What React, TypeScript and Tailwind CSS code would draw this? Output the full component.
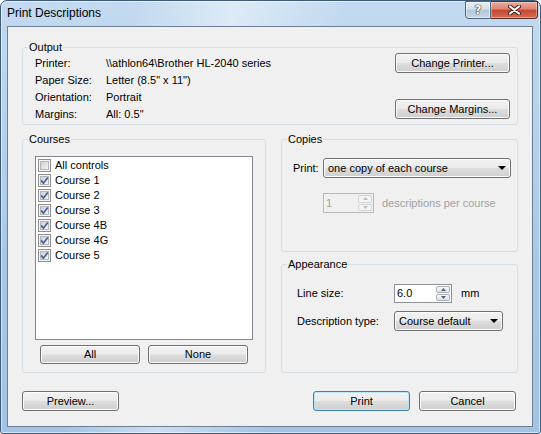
import React from 'react';

const gradient =
  'bg-[linear-gradient(to_bottom,#f2f2f2_0%,#ebebeb_48%,#dddddd_52%,#cfcfcf_100%)]';

interface ButtonProps {
  label: string;
  className?: string;
  isDefault?: boolean;
}

const VistaButton: React.FC<ButtonProps> = ({ label, className = '', isDefault }) => (
  <div
    className={`flex items-center justify-center rounded-[3px] border leading-none ${gradient} ${
      isDefault
        ? 'border-[#3c7fb1] shadow-[inset_0_0_0_1px_#bfe6f8]'
        : 'border-[#707070] shadow-[inset_0_0_0_1px_#fcfcfc]'
    } ${className}`}
  >
    {label}
  </div>
);

const GroupBox: React.FC<{ title: string; className?: string; children: React.ReactNode }> = ({
  title,
  className = '',
  children,
}) => (
  <fieldset className={`rounded-[3px] border border-[#d5dfe5] ${className}`}>
    <legend className="ml-[5px] px-[1px] text-[11px] leading-[13px]">{title}</legend>
    {children}
  </fieldset>
);

const CheckBox: React.FC<{ checked?: boolean }> = ({ checked }) => (
  <svg width="13" height="13" viewBox="0 0 13 13" className="shrink-0">
    <defs>
      <linearGradient id="cbInner" x1="0" y1="0" x2="1" y2="1">
        <stop offset="0" stopColor="#c9ccd1" />
        <stop offset="1" stopColor="#f7f7f7" />
      </linearGradient>
    </defs>
    <rect x="0.5" y="0.5" width="12" height="12" fill="#f5f5f5" stroke="#8e8f8f" />
    <rect x="2.5" y="2.5" width="8" height="8" fill="url(#cbInner)" stroke="#b3b7bc" />
    {checked && (
      <path d="M3.2 6.4 L5.4 9.2 L9.8 3.4" fill="none" stroke="#4a5f97" strokeWidth="1.7" />
    )}
  </svg>
);

const Arrow: React.FC<{ up?: boolean; color: string }> = ({ up, color }) => (
  <svg width="5" height="3" viewBox="0 0 5 3">
    <path d={up ? 'M0 3h5L2.5 0z' : 'M0 0h5L2.5 3z'} fill={color} />
  </svg>
);

const SpinBox: React.FC<{ value: string; className?: string; disabled?: boolean }> = ({
  value,
  className = '',
  disabled,
}) => (
  <div
    className={`flex border ${
      disabled ? 'border-[#b8bbbe] bg-[#f0f0f0] text-[#a2a2a2]' : 'border-[#8e9297] bg-white'
    } ${className}`}
  >
    <span className="flex flex-1 items-center pl-[2px]">{value}</span>
    <div className="flex w-[16px] flex-col gap-px p-px">
      {[true, false].map(up => (
        <div
          key={String(up)}
          className={`flex flex-1 items-center justify-center rounded-[2px] border ${
            disabled
              ? 'border-[#d2d4d6] bg-[#f4f4f4]'
              : 'border-[#a9b0b8] bg-[linear-gradient(to_bottom,#f8f8f8,#dde2e7)]'
          }`}
        >
          <Arrow up={up} color={disabled ? '#bcbcbc' : '#4d6185'} />
        </div>
      ))}
    </div>
  </div>
);

const Combo: React.FC<{ value: string; className?: string }> = ({ value, className = '' }) => (
  <div
    className={`flex h-[20px] items-center justify-between rounded-[3px] border border-[#707070] pl-[4px] pr-[4px] shadow-[inset_0_0_0_1px_#fcfcfc] ${gradient} ${className}`}
  >
    <span>{value}</span>
    <svg width="8" height="4" viewBox="0 0 8 4">
      <path d="M0 0h8L4 4z" fill="#000" />
    </svg>
  </div>
);

const outputRows = [
  ['Printer:', '\\\\athlon64\\Brother HL-2040 series'],
  ['Paper Size:', 'Letter (8.5" x 11")'],
  ['Orientation:', 'Portrait'],
  ['Margins:', 'All: 0.5"'],
];

const courses = [
  { name: 'All controls', checked: false },
  { name: 'Course 1', checked: true },
  { name: 'Course 2', checked: true },
  { name: 'Course 3', checked: true },
  { name: 'Course 4B', checked: true },
  { name: 'Course 4G', checked: true },
  { name: 'Course 5', checked: true },
];

export default function App() {
  return (
    <div className="h-[434px] w-[541px] font-['Liberation_Sans',Arial,sans-serif] text-[11px] text-black">
      <div className="flex h-full w-full flex-col rounded-t-[7px] rounded-b-[3px] border border-[#3f5b7a] bg-[linear-gradient(100deg,rgba(255,255,255,0)_22%,rgba(255,255,255,0.45)_38%,rgba(255,255,255,0)_56%),linear-gradient(to_bottom,#c3daf0,#a9c8e7_60%,#a3c3e4)] shadow-[inset_0_0_0_1px_rgba(255,255,255,0.55)]">
        {/* Title bar */}
        <div className="flex h-[25px] justify-between">
          <span className="pl-[6px] pt-[5px] text-[12px] leading-[15px]">Print Descriptions</span>
          <div className="flex items-start pr-[2px]">
            <div className="flex h-[18px] w-[26px] items-center justify-center rounded-bl-[4px] border border-[#4f6580] bg-[linear-gradient(to_bottom,#e6eef6_0%,#d3dfeb_45%,#b4c7da_50%,#c6d6e6_100%)] shadow-[inset_0_0_0_1px_rgba(255,255,255,0.5)]">
              <span className="font-['DejaVu_Sans',sans-serif] text-[12px] font-bold leading-none text-white [text-shadow:0_0_1px_#223,0_0_1px_#223,0_0_1px_#223]">
                ?
              </span>
            </div>
            <div className="flex h-[18px] w-[47px] items-center justify-center rounded-br-[4px] border border-l-0 border-[#5a2c26] bg-[linear-gradient(to_bottom,#e9ab9c_0%,#dc836f_45%,#c7462f_50%,#d36c52_100%)] shadow-[inset_0_0_0_1px_rgba(255,255,255,0.35)]">
              <svg width="13" height="10" viewBox="0 0 13 10">
                <path d="M2 1.5 L11 8.5 M11 1.5 L2 8.5" stroke="#3b1e1a" strokeWidth="4" strokeLinecap="round" />
                <path d="M2 1.5 L11 8.5 M11 1.5 L2 8.5" stroke="#fff" strokeWidth="2.2" strokeLinecap="round" />
              </svg>
            </div>
          </div>
        </div>

        {/* Client area */}
        <div className="mb-[6px] ml-[6px] mr-[7px] flex flex-1 flex-col border border-[#6e7f93] bg-[#f0f0f0] px-[14px] pt-[14px]">
          <GroupBox title="Output">
            <div className="flex justify-between pb-[1px] pl-[12px] pr-[7px]">
              <div className="pt-[1px]">
                {outputRows.map(([k, v]) => (
                  <div key={k} className="flex h-[17px] items-center">
                    <span className="w-[71px]">{k}</span>
                    <span>{v}</span>
                  </div>
                ))}
              </div>
              <div className="-mt-[1px] flex flex-col gap-[26px]">
                <VistaButton label="Change Printer..." className="h-[20px] w-[115px]" />
                <VistaButton label="Change Margins..." className="h-[20px] w-[115px]" />
              </div>
            </div>
          </GroupBox>

          <div className="mt-[8px] flex">
            <GroupBox title="Courses" className="w-[244px]">
              <div className="px-[12px] pb-[8px] pt-[10px]">
                <div className="h-[184px] border border-[#828790] bg-white pl-[2px] pt-[1px]">
                  {courses.map(c => (
                    <div key={c.name} className="flex h-[15px] items-center gap-[4px]">
                      <CheckBox checked={c.checked} />
                      <span>{c.name}</span>
                    </div>
                  ))}
                </div>
                <div className="mt-[5px] flex gap-[8px] pl-[5px]">
                  <VistaButton label="All" className="h-[19px] w-[100px]" />
                  <VistaButton label="None" className="h-[19px] w-[100px]" />
                </div>
              </div>
            </GroupBox>

            <div className="ml-[15px] flex flex-1 flex-col">
              <GroupBox title="Copies" className="h-[119px]">
                <div className="pl-[11px] pr-[6px]">
                  <div className="mt-[12px] flex items-center">
                    <span className="w-[30px]">Print:</span>
                    <Combo value="one copy of each course" className="flex-1" />
                  </div>
                  <div className="mt-[15px] flex items-center pl-[30px]">
                    <SpinBox value="1" disabled className="h-[20px] w-[51px]" />
                    <span className="ml-[8px] text-[#a2a2a2]">descriptions per course</span>
                  </div>
                </div>
              </GroupBox>

              <GroupBox title="Appearance" className="mt-[6px] flex-1">
                <div className="pl-[15px]">
                  <div className="mt-[13px] flex items-center">
                    <span className="w-[97px]">Line size:</span>
                    <SpinBox value="6.0" className="h-[19px] w-[58px]" />
                    <span className="ml-[9px]">mm</span>
                  </div>
                  <div className="mt-[8px] flex items-center">
                    <span className="w-[97px]">Description type:</span>
                    <Combo value="Course default" className="w-[109px]" />
                  </div>
                </div>
              </GroupBox>
            </div>
          </div>

          <div className="mr-[2px] mt-[18px] flex justify-between">
            <VistaButton label="Preview..." className="h-[20px] w-[97px]" />
            <div className="flex gap-[9px]">
              <VistaButton label="Print" isDefault className="h-[20px] w-[97px]" />
              <VistaButton label="Cancel" className="h-[20px] w-[97px]" />
            </div>
          </div>
        </div>
      </div>
    </div>
  );
}
